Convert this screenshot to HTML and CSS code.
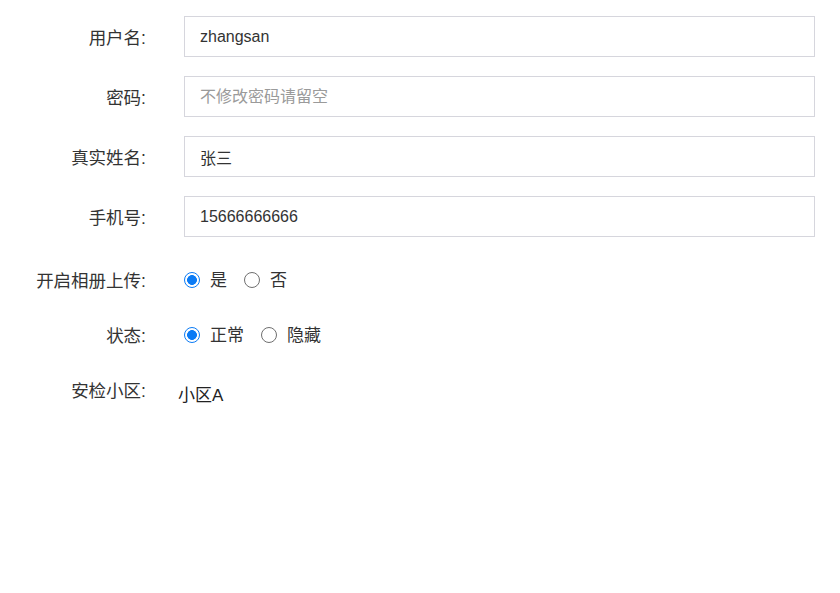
FILE: index.html
```html
<!DOCTYPE html>
<html lang="zh-CN">
<head>
<meta charset="utf-8">
<title>编辑用户</title>
<link rel="stylesheet" href="styles.css">
</head>
<body>
<form class="form">
  <div class="row input-row">
    <label class="label">用户名:</label>
    <input class="field" type="text" value="zhangsan">
  </div>
  <div class="row input-row">
    <label class="label">密码:</label>
    <input class="field" type="password" placeholder="不修改密码请留空">
  </div>
  <div class="row input-row">
    <label class="label">真实姓名:</label>
    <input class="field" type="text" value="张三">
  </div>
  <div class="row input-row">
    <label class="label">手机号:</label>
    <input class="field" type="text" value="15666666666">
  </div>
  <div class="row choice-row">
    <label class="label">开启相册上传:</label>
    <div class="choices">
      <label class="choice"><input class="radio" type="radio" name="album" checked><span>是</span></label>
      <label class="choice"><input class="radio" type="radio" name="album"><span>否</span></label>
    </div>
  </div>
  <div class="row choice-row">
    <label class="label">状态:</label>
    <div class="choices">
      <label class="choice"><input class="radio" type="radio" name="status" checked><span>正常</span></label>
      <label class="choice"><input class="radio" type="radio" name="status"><span>隐藏</span></label>
    </div>
  </div>
  <div class="row choice-row">
    <label class="label">安检小区:</label>
    <div class="value">小区A</div>
  </div>
</form>
</body>
</html>
```

FILE: styles.css
```css
html, body {
  margin: 0;
  padding: 0;
  background: #ffffff;
}

body {
  font-family: "Liberation Sans", "Noto Sans CJK SC", sans-serif;
  color: #333333;
}

.form {
  display: flex;
  flex-direction: column;
  padding: 16px 25px 0 0;
}

.row {
  display: flex;
  align-items: center;
  gap: 38px;
}

.input-row {
  height: 41px;
  margin-bottom: 19px;
}

.choice-row {
  height: 46px;
  margin-bottom: 9px;
}

.label {
  width: 146px;
  flex: none;
  text-align: right;
  font-size: 17.5px;
  color: #333333;
}

.field {
  flex: 1;
  box-sizing: border-box;
  height: 41px;
  margin: 0;
  padding: 0 15px;
  border: 1px solid #d6d6dd;
  border-radius: 0;
  outline: none;
  font-family: "Liberation Sans", "Noto Sans CJK SC", sans-serif;
  font-size: 16px;
  color: #333333;
  background: #ffffff;
}

.field::placeholder {
  color: #9a9a9a;
}

.choices {
  display: flex;
  align-items: center;
  gap: 17px;
}

.choice {
  display: flex;
  align-items: center;
  gap: 10px;
  font-size: 17px;
  color: #333333;
}

.choice span {
  margin-top: -1px;
}

.radio {
  appearance: none;
  -webkit-appearance: none;
  box-sizing: border-box;
  width: 16px;
  height: 16px;
  margin: 1px 0 0 0;
  border: 1px solid #6f6f6f;
  border-radius: 50%;
  background: #ffffff;
}

.radio:checked {
  border: 1.5px solid #0b7bf5;
  background: radial-gradient(circle, #0b7bf5 0 4.6px, #ffffff 5.2px);
}

.value {
  margin: 8px 0 0 -6px;
  font-size: 17px;
  color: #222222;
}
```
